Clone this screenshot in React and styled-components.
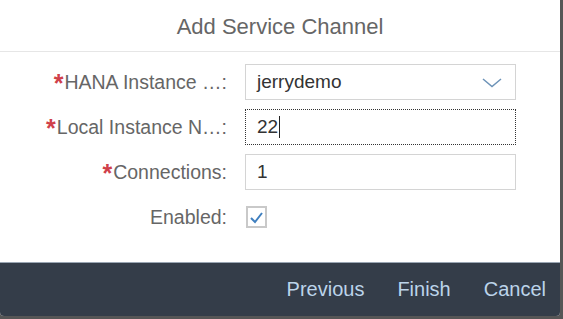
import React from 'react'
import styled, { createGlobalStyle } from 'styled-components'

const Global = createGlobalStyle`
  html, body {
    margin: 0;
    padding: 0;
    background: #565656;
    font-family: 'Liberation Sans', Arial, sans-serif;
  }
`

function Field({ label, required, children }) {
    return (
        <>
            <Label>
                {required && <Star>*</Star>}
                {label}
            </Label>
            <Cell>{children}</Cell>
        </>
    )
}

export default function App() {
    return (
        <>
            <Global />
            <Dialog>
                <Header>Add Service Channel</Header>
                <Form>
                    <Field label="HANA Instance …:" required>
                        <Select>
                            <span>jerrydemo</span>
                            <svg width="20" height="10" viewBox="0 0 20 10">
                                <polyline points="1,1 10,8.5 19,1" fill="none" stroke="#6d93b8" strokeWidth="1.5" />
                            </svg>
                        </Select>
                    </Field>
                    <Field label="Local Instance N…:" required>
                        <Input focused>
                            22<Caret />
                        </Input>
                    </Field>
                    <Field label="Connections:" required>
                        <Input>1</Input>
                    </Field>
                    <Field label="Enabled:">
                        <Check>
                            <svg width="15" height="13" viewBox="0 0 15 13">
                                <polyline points="2,7 6,11 13,2" fill="none" stroke="#3f7fbf" strokeWidth="2" />
                            </svg>
                        </Check>
                    </Field>
                </Form>
                <Footer>
                    <FootButton>Previous</FootButton>
                    <FootButton>Finish</FootButton>
                    <FootButton>Cancel</FootButton>
                </Footer>
            </Dialog>
        </>
    )
}

const Dialog = styled.div`
    width: 560px;
    height: 316px;
    background: #fff;
    display: flex;
    flex-direction: column;
    border-radius: 0 0 4px 4px;
    overflow: hidden;
`

const Header = styled.div`
    height: 52px;
    border-bottom: 1px solid #e6e6e6;
    display: flex;
    align-items: center;
    justify-content: center;
    padding-top: 2px;
    box-sizing: border-box;
    font-size: 22px;
    color: #666;
`

const Form = styled.div`
    flex: 1;
    display: grid;
    grid-template-columns: 227px 271px;
    grid-auto-rows: 36px;
    column-gap: 18px;
    row-gap: 9px;
    padding-top: 12px;
    align-content: start;
`

const Label = styled.div`
    display: flex;
    align-items: center;
    justify-content: flex-end;
    font-size: 19.5px;
    color: #666;
    white-space: nowrap;
`

const Star = styled.span`
    color: #d0404a;
    font-size: 25px;
    font-weight: bold;
    line-height: 1;
    margin-right: 1px;
    position: relative;
    top: 1px;
`

const Cell = styled.div`
    display: flex;
    align-items: center;
`

const Input = styled.div`
    width: 100%;
    height: 36px;
    box-sizing: border-box;
    border: 1px ${p => (p.focused ? 'dotted #333' : 'solid #d4d4d4')};
    display: flex;
    align-items: center;
    padding-left: 11px;
    font-size: 19px;
    color: #333;
`

const Caret = styled.span`
    display: inline-block;
    width: 1px;
    height: 22px;
    background: #222;
    margin-left: 1px;
`

const Select = styled(Input)`
    justify-content: space-between;
    padding-right: 13px;

    svg {
        margin-top: 2px;
    }
`

const Check = styled.div`
    width: 21px;
    height: 22px;
    box-sizing: border-box;
    border: 2px solid #c9c9c9;
    margin-left: 1px;
    display: flex;
    align-items: center;
    justify-content: center;
`

const Footer = styled.div`
    height: 54px;
    background: #343d49;
    border-top: 1px solid #9aa6b3;
    box-sizing: border-box;
    display: flex;
    align-items: center;
    justify-content: flex-end;
    gap: 33px;
    padding-right: 14px;
`

const FootButton = styled.button`
    background: none;
    border: none;
    padding: 0;
    font-family: 'Liberation Sans', Arial, sans-serif;
    font-size: 20px;
    color: #bcd4ea;
    cursor: pointer;
`
